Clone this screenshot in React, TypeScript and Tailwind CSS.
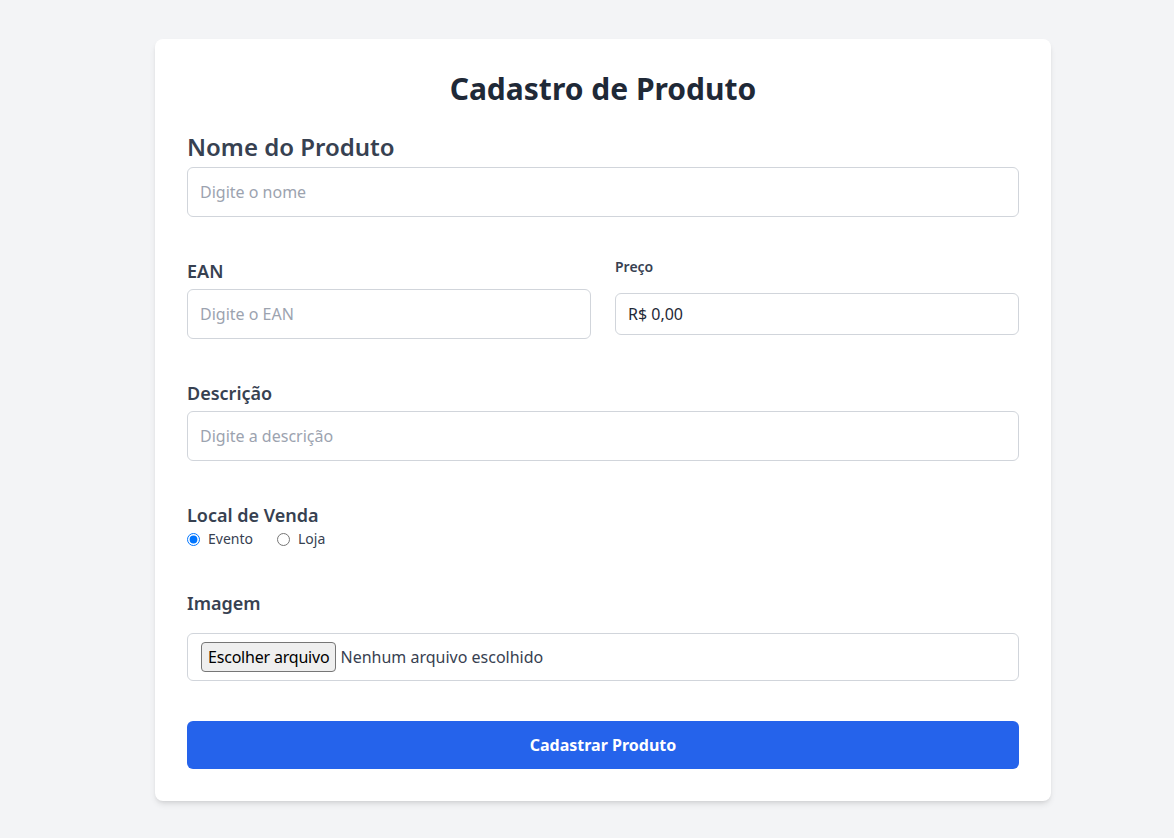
import React, { useState } from "react";

const font = { fontFamily: '"Noto Sans", "Open Sans", sans-serif' };

const inputCls =
  "w-full rounded-md border border-[#d1d5db] px-3 text-base text-[#1f2937] placeholder-[#9ca3af] outline-none";

export default function App() {
  const [local, setLocal] = useState("evento");

  return (
    <div className="min-h-screen bg-[#f3f4f6] pt-[39px] pl-8" style={font}>
      <div className="mx-auto max-w-4xl rounded-lg bg-white p-8 shadow-md">
        <h1 className="mb-6 text-center text-3xl font-bold text-[#1f2937]">Cadastro de Produto</h1>

        <form onSubmit={(e) => e.preventDefault()}>
          <label className="mb-1 block text-2xl font-semibold text-[#374151]">Nome do Produto</label>
          <input type="text" placeholder="Digite o nome" className={`${inputCls} py-3`} />

          <div className="mt-10 grid grid-cols-2 gap-6">
            <div>
              <label className="mb-1 block text-lg font-semibold text-[#374151]">EAN</label>
              <input type="text" placeholder="Digite o EAN" className={`${inputCls} py-3`} />
            </div>
            <div>
              <label className="mb-4 block text-sm font-semibold text-[#374151]">Preço</label>
              <input type="text" defaultValue="R$ 0,00" className={`${inputCls} py-2`} />
            </div>
          </div>

          <label className="mt-10 mb-1 block text-lg font-semibold text-[#374151]">Descrição</label>
          <input type="text" placeholder="Digite a descrição" className={`${inputCls} py-3`} />

          <label className="mt-10 block text-lg font-semibold text-[#374151]">Local de Venda</label>
          <div className="flex items-center gap-6 text-sm text-[#374151]">
            <label className="flex items-center gap-2">
              <input type="radio" name="local" checked={local === "evento"} onChange={() => setLocal("evento")} />
              Evento
            </label>
            <label className="flex items-center gap-2">
              <input type="radio" name="local" checked={local === "loja"} onChange={() => setLocal("loja")} />
              Loja
            </label>
          </div>

          <label className="mt-10 mb-4 block text-lg font-semibold text-[#374151]">Imagem</label>
          <label className="flex w-full items-center rounded-md border border-[#d1d5db] py-2 pl-[13px] text-base text-[#374151]">
            <input type="file" className="hidden" />
            <span className="rounded-sm border border-[#767676] bg-[#efefef] px-[6px] py-[2px] leading-6 tracking-[-0.2px] text-black">
              Escolher arquivo
            </span>
            <span className="ml-1">Nenhum arquivo escolhido</span>
          </label>

          <button
            type="submit"
            className="mt-10 w-full rounded-md bg-[#2563eb] py-3 text-base font-bold text-white"
          >
            Cadastrar Produto
          </button>
        </form>
      </div>
    </div>
  );
}
